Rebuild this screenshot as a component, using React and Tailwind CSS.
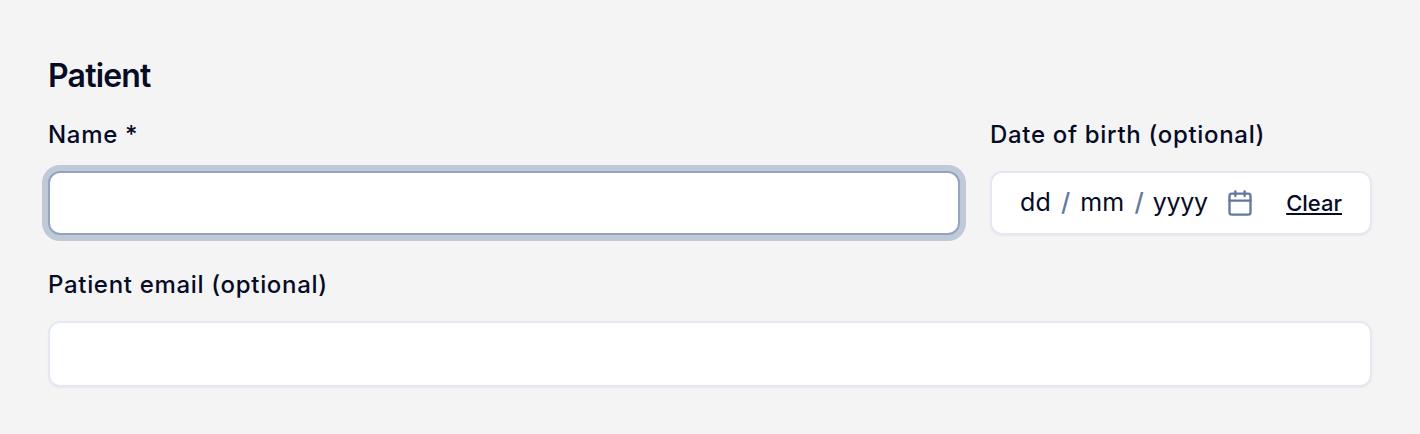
import React from 'react'

const CalendarIcon = () => (
  <svg width="28" height="28" viewBox="0 0 24 24" fill="none" stroke="#64789b" strokeWidth="2" strokeLinecap="round" strokeLinejoin="round">
    <path d="M8 2v4" />
    <path d="M16 2v4" />
    <rect x="3" y="4" width="18" height="18" rx="2" />
    <path d="M3 10h18" />
  </svg>
)

const App = () => {
  return (
    <div className="w-[1420px] h-[434px] overflow-hidden bg-[#f4f4f5] px-12 pt-[54px] text-[#060b26] font-['Inter',sans-serif]">
      {/* Patient section */}
      <h2 className="text-[32px] leading-[44px] font-semibold tracking-[-0.8px]">Patient</h2>

      <div className="mt-[21px] flex gap-[30px]">
        <div className="flex-1">
          <label className="block text-2xl leading-[32px] font-medium tracking-[0.68px]">Name *</label>
          <input className="mt-5 block w-full h-16 rounded-xl bg-white border-2 border-[#94a4bf] outline-none ring-[6px] ring-[#c0c9d8]" />
        </div>
        <div className="w-[382px]">
          <label className="block text-2xl leading-[32px] font-medium tracking-[0.68px]">Date of birth (optional)</label>
          <div className="mt-5 h-16 rounded-xl bg-white border-2 border-[#e3e8f2] shadow-xs flex items-center pl-[28px] pr-7">
            <span className="text-[25px] tracking-[0.2px]">dd</span>
            <span className="text-[25px] text-[#64789b] font-medium mx-[10px]">/</span>
            <span className="text-[25px] tracking-[0.2px]">mm</span>
            <span className="text-[25px] text-[#64789b] font-medium ml-[10px] mr-[9px]">/</span>
            <span className="text-[25px] tracking-[-0.3px]">yyyy</span>
            <span className="ml-[18px]"><CalendarIcon /></span>
            <a className="ml-auto text-[22px] font-medium underline decoration-2 underline-offset-2">Clear</a>
          </div>
        </div>
      </div>

      <div className="mt-[34px]">
        <label className="block text-2xl leading-[32px] font-medium tracking-[0.68px]">Patient email (optional)</label>
        <input className="mt-5 block w-full h-[66px] rounded-xl bg-white border-2 border-[#e3e8f2] shadow-xs outline-none" />
      </div>
    </div>
  )
}

export default App
